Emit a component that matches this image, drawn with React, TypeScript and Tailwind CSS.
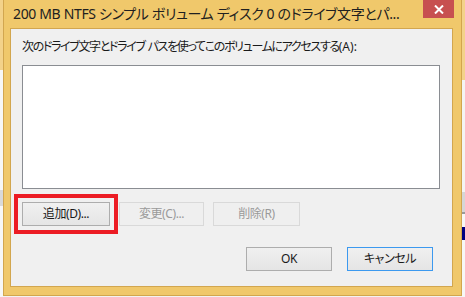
import React from 'react';

const ui = "font-['Noto_Sans','Noto_Sans_CJK_JP',sans-serif]";

type BtnProps = {
  label: string;
  w: string;
  disabled?: boolean;
  focused?: boolean;
};

const Btn: React.FC<BtnProps> = ({ label, w, disabled, focused }) => {
  const tone = disabled
    ? 'border-[#d9d9d9] bg-[#efefef] text-[#9a9a9a]'
    : focused
      ? 'border-[#3c99ef] bg-gradient-to-b from-[#f0f0f0] to-[#e5e5e5] text-[#1a1a1a]'
      : 'border-[#adadad] bg-gradient-to-b from-[#f0f0f0] to-[#e5e5e5] text-[#1a1a1a]';
  return (
    <div
      className={`${w} flex h-[24px] items-center justify-center border text-[12px] tracking-[-0.4px] [font-feature-settings:'palt'] ${tone}`}
    >
      {label}
    </div>
  );
};

export default function App() {
  return (
    <div className={`flex h-[297px] w-[465px] overflow-hidden bg-[#f3f3f3] ${ui}`}>
      {/* window behind, left edge */}
      <div className="flex w-[3px] flex-col">
        <div className="h-[70px] bg-[#f3d28a]" />
        <div className="h-[120px] bg-[#f7f7f7]" />
        <div className="h-[16px] bg-[#d9d9d9]" />
        <div className="flex-1 bg-[#f7f7f7]" />
      </div>

      {/* dialog */}
      <div className="flex h-[296px] w-[459px] flex-col border border-t-0 border-[#d2a64f] bg-[#f0c86b]">
        {/* title bar */}
        <div className="flex h-[28px] items-start">
          <div className="flex-1 whitespace-nowrap pl-[9px] pt-[4px] text-[14px] leading-[20px] tracking-[-0.35px] text-[#202020] [font-feature-settings:'palt']">
            200 MB NTFS シンプル ボリューム ディスク 0 のドライブ文字とパ...
          </div>
          <div className="mr-[7px] flex h-[18px] w-[31px] items-center justify-center bg-[#c75050]">
            <svg width="10" height="9" viewBox="0 0 10 9">
              <path d="M1 0.5 L9 8.5 M9 0.5 L1 8.5" stroke="#fff" strokeWidth="2" />
            </svg>
          </div>
        </div>

        {/* client area */}
        <div className="ml-[6px] mr-[8px] flex h-[259px] flex-col border border-[#d2a64f] bg-[#f0f0f0] px-[11px] pt-[10px]">
          <div className="h-[16px] whitespace-nowrap text-[12px] leading-[16px] tracking-[-1.35px] text-[#1a1a1a] [font-feature-settings:'palt']">
            次のドライブ文字とドライブ<span className="tracking-normal"> </span>パスを使ってこのボリュームにアクセスする
            <span className="tracking-[0px]">(A):</span>
          </div>
          <div className="mt-[10px] h-[124px] w-[418px] border border-[#8a8d92] bg-white" />

          <div className="mt-[13px] flex gap-[9px]">
            <div className="relative">
              <Btn label="追加(D)..." w="w-[88px]" />
              <div className="pointer-events-none absolute -inset-[8px] border-4 border-[#ec1c24]" />
            </div>
            <Btn label="変更(C)..." w="w-[85px]" disabled />
            <Btn label="削除(R)" w="w-[87px]" disabled />
          </div>

          <div className="mt-[21px] flex gap-[15px] pl-[224px]">
            <Btn label="OK" w="w-[86px]" />
            <Btn label="キャンセル" w="w-[86px]" focused />
          </div>
        </div>
      </div>

      {/* window behind, right edge */}
      <div className="flex w-[3px] flex-col">
        <div className="h-[80px] bg-[#f3d28a]" />
        <div className="h-[112px] bg-[#f4f4f4]" />
        <div className="h-[20px] bg-[#d6d6d6]" />
        <div className="h-[2px] bg-[#9a9a9a]" />
        <div className="h-[13px] bg-[#f7f7f7]" />
        <div className="h-[13px] bg-[#000080]" />
        <div className="flex-1 bg-[#f7f7f7]" />
      </div>
    </div>
  );
}
